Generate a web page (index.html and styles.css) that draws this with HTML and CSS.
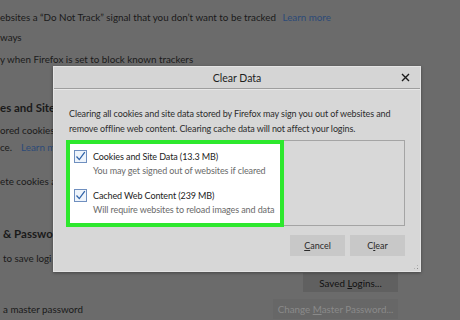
FILE: index.html
```html
<!DOCTYPE html>
<html>
<head>
<meta charset="utf-8">
<link rel="stylesheet" href="styles.css">
</head>
<body>
<div class="page">
  <div class="line l1">ebsites a “Do Not Track” signal that you don’t want to be tracked <span class="link">Learn more</span></div>
  <div class="line l2">ways</div>
  <div class="line l3">y when Firefox is set to block known trackers</div>
  <div class="line heading h1">es and Site</div>
  <div class="line l5">ored cookies,</div>
  <div class="line l6">ce.&nbsp; <span class="link">Learn m</span></div>
  <div class="line l7">ete cookies a</div>
  <div class="line heading h2">&amp; Passwo</div>
  <div class="line l9">to save logi</div>
  <div class="row r10">
    <span></span>
    <span class="pbtn"><span>Saved <u>L</u>ogins...</span></span>
  </div>
  <div class="row r11">
    <span>a master password</span>
    <span class="pbtn disabled"><span>Change <u>M</u>aster Password...</span></span>
  </div>
</div>

<div class="dialog">
  <div class="dlg-head">
    <span class="dlg-title">Clear Data</span>
    <span class="dlg-close">
      <svg width="9" height="9" viewBox="0 0 9 9"><path d="M1 1 L8 8 M8 1 L1 8" stroke="#1a1a1a" stroke-width="1.4"/></svg>
    </span>
  </div>
  <div class="dlg-body">
    <p class="desc">Clearing all cookies and site data stored by Firefox may sign you out of websites and<br>remove offline web content. Clearing cache data will not affect your logins.</p>
    <div class="listbox">
      <div class="hilite">
        <div class="item">
          <span class="cb"><svg width="11" height="11" viewBox="0 0 11 11"><path d="M1.5 5.5 L4.3 8.6 L9.8 1.2" fill="none" stroke="#2f62a8" stroke-width="1.3"/></svg></span>
          <div class="itxt">
            <div class="ilabel">Cookies and Site Data (13.3 MB)</div>
            <div class="isub">You may get signed out of websites if cleared</div>
          </div>
        </div>
        <div class="item">
          <span class="cb"><svg width="11" height="11" viewBox="0 0 11 11"><path d="M1.5 5.5 L4.3 8.6 L9.8 1.2" fill="none" stroke="#2f62a8" stroke-width="1.3"/></svg></span>
          <div class="itxt">
            <div class="ilabel">Cached Web Content (239 MB)</div>
            <div class="isub">Will require websites to reload images and data</div>
          </div>
        </div>
      </div>
    </div>
    <div class="actions">
      <span class="btn"><span><u>C</u>ancel</span></span>
      <span class="btn"><span>C<u>l</u>ear</span></span>
    </div>
  </div>
  <div class="grip"></div>
</div>
</body>
</html>
```

FILE: styles.css
```css
html, body {
  margin: 0;
  padding: 0;
  width: 460px;
  height: 320px;
  overflow: hidden;
  background: #6b6b6b;
  font-family: Lato, "Noto Sans", sans-serif;
  color: #1a1a1a;
}
.page {
  display: flex;
  flex-direction: column;
  font-size: 9.8px;
  line-height: 16px;
  white-space: nowrap;
}
.link { color: #2b4a78; margin-left: 4px; }
.l1 { margin-top: 9px; }
.l2 { margin-top: 4px; }
.l3 { margin-top: 6px; }
.heading { font-weight: 700; font-size: 11.5px; line-height: 18px; }
.h1 { margin-top: 32px; }
.l5 { margin-top: 5px; }
.l6 { margin-top: 1px; }
.l7 { margin-top: 18px; }
.h2 { margin-top: 36px; padding-left: 3px; }
.l9 { margin-top: 7px; padding-left: 3px; }
.row {
  display: flex;
  justify-content: space-between;
  align-items: center;
  padding-right: 62px;
  padding-left: 3px;
}
.r10 { margin-top: 7px; height: 19px; }
.r11 { margin-top: 7px; height: 20px; }
.pbtn {
  display: inline-flex;
  align-items: center;
  justify-content: center;
  height: 100%;
  background: #606060;
  color: #111;
}
.r10 .pbtn { width: 95px; }
.pbtn.disabled { background: #676767; color: #8a8a8a; width: 125px; }

.dialog {
  position: absolute;
  left: 53px;
  top: 66px;
  width: 366px;
  height: 204px;
  background: #d7d7d7;
  border: 1px solid #e4e4e4;
  box-shadow: 0 1px 3px rgba(0,0,0,0.35);
  color: #2a2a2a;
  font-size: 9px;
  letter-spacing: -0.1px;
}
.dlg-head {
  height: 21px;
  display: flex;
  align-items: center;
  justify-content: center;
  position: relative;
  border-bottom: 1px solid #9e9e9e;
  box-shadow: 0 1px 0 #e8e8e8;
  background: #d5d5d5;
}
.dlg-title { font-size: 10.5px; color: #1e1e1e; letter-spacing: 0; }
.dlg-close {
  position: absolute;
  right: 10px;
  top: 6px;
  display: flex;
}
.dlg-body { padding: 17px 15px 0 12px; }
.desc {
  margin: 0 0 0 3px;
  line-height: 15px;
  color: #2c2c2c;
  white-space: nowrap;
}
.listbox {
  margin-top: 4px;
  height: 84px;
  border: 1px solid #a4a4a4;
  background: #d8d8d8;
  position: relative;
}
.hilite {
  position: absolute;
  left: -1px;
  top: -1px;
  width: 210px;
  height: 73px;
  border: 4px solid #2de82d;
  background: #fff;
  display: flex;
  flex-direction: column;
  gap: 11px;
  padding-top: 6px;
}
.item { display: flex; align-items: flex-start; padding-left: 4px; }
.cb {
  width: 11px;
  height: 11px;
  border: 1px solid #6f8fbf;
  background: #eef4fb;
  display: flex;
}
.itxt { margin-left: 6px; white-space: nowrap; }
.ilabel { line-height: 14px; color: #222; }
.isub { line-height: 14px; color: #6a6a6a; }
.actions {
  display: flex;
  justify-content: flex-end;
  gap: 5px;
  margin-top: 9px;
}
.btn {
  width: 55px;
  height: 21px;
  background: #c8c8c8;
  display: flex;
  align-items: center;
  justify-content: center;
  color: #2a2a2a;
  letter-spacing: 0;
}
.grip {
  position: absolute;
  right: 1px;
  bottom: 1px;
  width: 6px;
  height: 6px;
  background: radial-gradient(circle, #8c8c8c 0.8px, transparent 1px) 0 0 / 3px 3px;
  clip-path: polygon(100% 0, 100% 100%, 0 100%);
}
```
